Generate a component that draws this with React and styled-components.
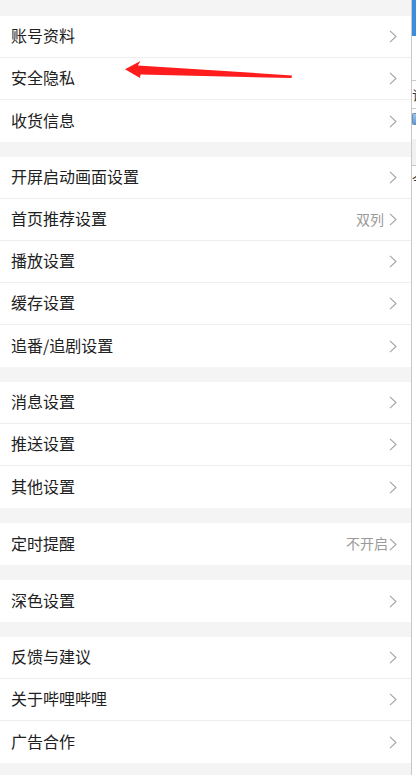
import React from "react";
import styled, { createGlobalStyle } from "styled-components";

const GlobalStyle = createGlobalStyle`
  html, body {
    margin: 0;
    padding: 0;
    background: #ffffff;
  }
  body {
    font-family: "Noto Sans CJK SC", "Noto Sans", "Liberation Sans", sans-serif;
  }
`;

const Page = styled.div`
  display: flex;
  width: 416px;
  height: 775px;
  overflow: hidden;
`;

const Main = styled.div`
  position: relative;
  width: 411px;
  flex: none;
  background: #f4f4f4;
  padding: 16px 0 0;
  display: flex;
  flex-direction: column;
  gap: 15px;
`;

const Group = styled.div`
  background: #ffffff;
  display: flex;
  flex-direction: column;
`;

const Row = styled.div`
  height: 42px;
  box-sizing: border-box;
  display: flex;
  align-items: center;
  padding: 0 14px 0 11px;
  border-bottom: ${(p) => (p.last ? "none" : "1px solid #eeeeee")};
`;

const Label = styled.span`
  flex: 1;
  font-size: 16px;
  line-height: 1;
  padding-bottom: 3px;
  color: #212121;
`;

const Value = styled.span`
  font-size: 14px;
  line-height: 1;
  padding-bottom: 2px;
  color: #9a9a9a;
  margin-right: ${(p) => (p.tight ? "1px" : "5px")};
`;

const Chevron = styled.svg`
  width: 8px;
  height: 13px;
  flex: none;
`;

const Arrow = styled.svg`
  position: absolute;
  left: 0;
  top: 0;
  width: 411px;
  height: 100px;
  pointer-events: none;
`;

const Side = styled.div`
  flex: 1;
  border-left: 1px solid #c8c8c8;
  background: #ffffff;
  display: flex;
  flex-direction: column;
  overflow: hidden;
`;

const SideBlue = styled.div`
  height: 36px;
  background: #3c8dde;
`;

const SideGap = styled.div`
  height: ${(p) => p.h}px;
  background: ${(p) => p.bg || "#ffffff"};
  border-bottom: ${(p) => (p.line ? "1px solid #c9c9c9" : "none")};
`;

const SideGlyph = styled.div`
  height: ${(p) => p.h}px;
  font-size: 13px;
  line-height: ${(p) => p.h}px;
  color: #333;
  white-space: nowrap;
  overflow: hidden;
`;

const SideBox = styled.div`
  height: 10px;
  margin: 4px 0;
  border-radius: 2px 0 0 2px;
  background: linear-gradient(#9fc6ee, #5d9ad8);
  border: 1px solid #6d8fb3;
  border-right: none;
`;

const groups = [
  [{ label: "账号资料" }, { label: "安全隐私" }, { label: "收货信息" }],
  [
    { label: "开屏启动画面设置" },
    { label: "首页推荐设置", value: "双列" },
    { label: "播放设置" },
    { label: "缓存设置" },
    { label: "追番/追剧设置" },
  ],
  [{ label: "消息设置" }, { label: "推送设置" }, { label: "其他设置" }],
  [{ label: "定时提醒", value: "不开启", tight: true }],
  [{ label: "深色设置" }],
  [{ label: "反馈与建议" }, { label: "关于哔哩哔哩" }, { label: "广告合作" }],
];

const ChevronIcon = () => (
  <Chevron viewBox="0 0 8 13">
    <polyline
      points="1,0.8 7,6.5 1,12.2"
      fill="none"
      stroke="#a3a3a3"
      strokeWidth="1.1"
    />
  </Chevron>
);

export default function App() {
  return (
    <>
      <GlobalStyle />
      <Page>
        <Main>
          {groups.map((items, gi) => (
            <Group key={gi}>
              {items.map((item, i) => (
                <Row key={item.label} last={i === items.length - 1}>
                  <Label>{item.label}</Label>
                  {item.value && <Value tight={item.tight}>{item.value}</Value>}
                  <ChevronIcon />
                </Row>
              ))}
            </Group>
          ))}
          {/* red annotation arrow */}
          <Arrow viewBox="0 0 411 100">
            <polygon
              points="125,69.3 140.5,61 137.8,65.6 292,75.4 291.5,78 140.5,74.6 140,78"
              fill="#fe1c1c"
            />
          </Arrow>
        </Main>
        <Side>
          <SideBlue />
          <SideGap h={44} line />
          <SideGlyph h={27}>订</SideGlyph>
          <SideGap h={0} line />
          <SideBox />
          <SideGap h={10} />
          <SideGap h={26} bg="#f1f1f1" line />
          <SideGlyph h={26}>今</SideGlyph>
        </Side>
      </Page>
    </>
  );
}
